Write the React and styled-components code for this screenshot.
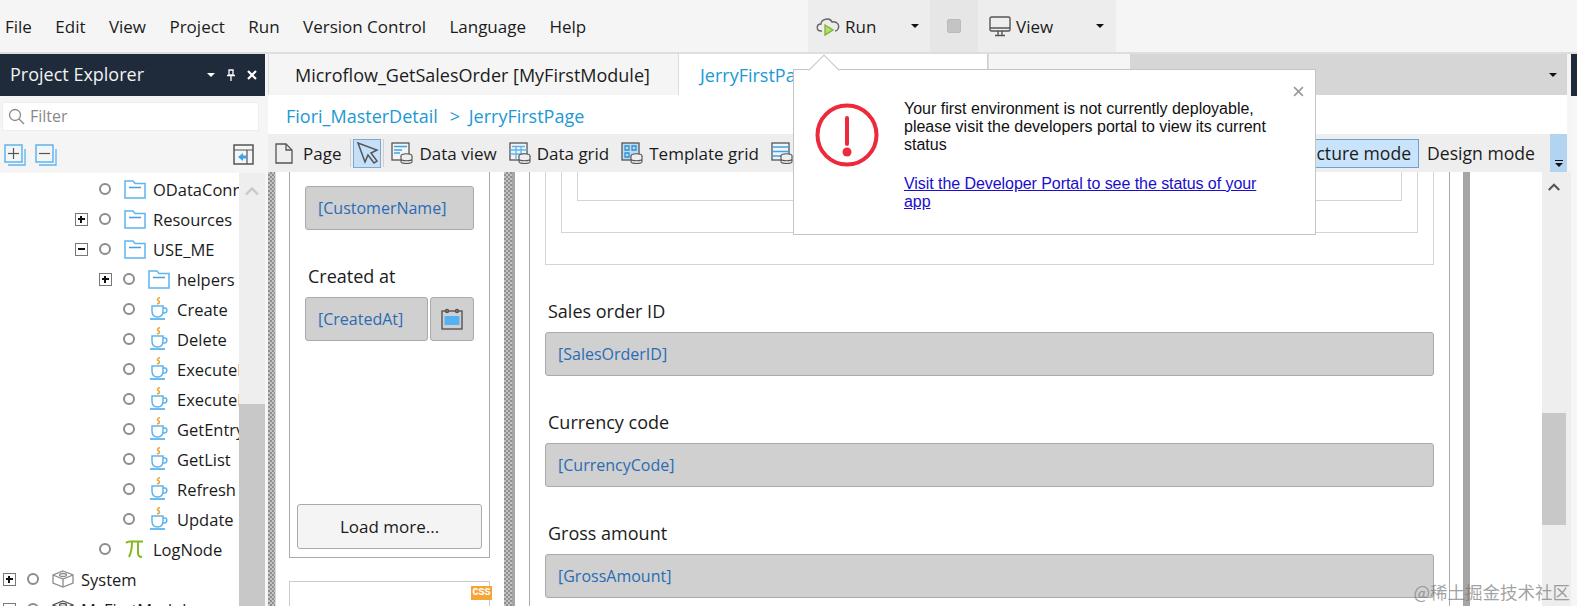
import React from 'react'
import styled, { createGlobalStyle } from "styled-components";

const GlobalStyle = createGlobalStyle`
  html, body {
    margin: 0;
    padding: 0;
    background: #f5f5f5;
    font-family: "Open Sans", "Noto Sans", sans-serif;
    color: #1b1b1b;
  }
  * { box-sizing: border-box; }
`;

const checker = `
  background-color: #c4c4c4;
  background-image: linear-gradient(45deg, #8f8f8f 25%, transparent 25%, transparent 75%, #8f8f8f 75%),
    linear-gradient(45deg, #8f8f8f 25%, transparent 25%, transparent 75%, #8f8f8f 75%);
  background-size: 4px 4px;
  background-position: 0 0, 2px 2px;
`;

const Page = styled.div`
  position: relative;
  width: 1577px;
  height: 606px;
  overflow: hidden;
  display: flex;
  flex-direction: column;
  font-size: 16.5px;
`;

/* top menu */
const MenuBar = styled.div`
  height: 54px;
  flex: none;
  display: flex;
  background: #f5f5f5;
  border-bottom: 2px solid #dedede;
  font-size: 17px;
`;
const MenuList = styled.div`
  width: 808px;
  display: flex;
  align-items: center;
  padding-left: 5px;
  gap: 23.4px;
`;
const ToolGroup = styled.div`
  width: ${p => p.$w}px;
  background: ${p => p.$bg || "#ededed"};
  display: flex;
  align-items: center;
  justify-content: ${p => p.$center ? "center" : "flex-start"};
  padding-left: ${p => p.$center ? 0 : p.$pad || 8}px;
  gap: 5px;
`;
const Caret = styled.span`
  width: 0;
  height: 0;
  border-left: 4px solid transparent;
  border-right: 4px solid transparent;
  border-top: 4px solid ${p => p.$color || "#111"};
  margin-left: ${p => p.$ml || 0}px;
  flex: none;
`;
const StopBox = styled.span`
  width: 14px;
  height: 14px;
  border-radius: 2px;
  background: #c4c4c4;
  border: 1px solid #bbb;
`;

const Body = styled.div`
  flex: 1;
  display: flex;
  min-height: 0;
`;

/* left side */
const Sidebar = styled.div`
  width: 268px;
  flex: none;
  display: flex;
  flex-direction: column;
  background: #f5f5f5;
`;
const PanelHeader = styled.div`
  width: 265px;
  height: 42px;
  flex: none;
  background: #1f2a3a;
  color: #f2f2f2;
  display: flex;
  align-items: center;
  padding: 0 8px 3px 10px;
  font-size: 18px;
`;
const PanelTitle = styled.span`
  flex: 1;
`;
const PanelIcons = styled.div`
  display: flex;
  align-items: center;
  gap: 11px;
  padding-top: 3px;
`;
const FilterBox = styled.div`
  margin: 6px 0 0 2px;
  width: 257px;
  height: 29px;
  flex: none;
  background: #fff;
  border: 1px solid #eee;
  color: #888;
  font-size: 16px;
  display: flex;
  align-items: center;
  gap: 5px;
  padding: 0 0 1px 5px;
`;
const TreeTools = styled.div`
  height: 37px;
  margin-top: 5px;
  flex: none;
  display: flex;
  align-items: center;
  padding: 0 14px 0 4px;
  gap: 9px;
`;
const PaneToggle = styled.span`
  margin-left: auto;
  display: flex;
`;
const TreeArea = styled.div`
  flex: 1;
  width: 265px;
  display: flex;
  min-height: 0;
`;
const TreeList = styled.div`
  width: 239px;
  flex: none;
  background: #fff;
  overflow: hidden;
  padding-top: 1px;
`;
const TreeRow = styled.div`
  height: 30px;
  display: flex;
  align-items: center;
  white-space: nowrap;
  padding-left: ${p => 3 + p.$level * 24}px;
  color: #1b1b1b;
`;
const Expander = styled.span`
  width: 13px;
  height: 13px;
  flex: none;
  margin-right: 11px;
  visibility: ${p => p.$kind ? "visible" : "hidden"};
  border: 1px solid #777;
  position: relative;
  &::before {
    content: "";
    position: absolute;
    left: 2px;
    right: 2px;
    top: 4px;
    height: 2px;
    background: #111;
  }
  &::after {
    content: "";
    display: ${p => p.$kind === "plus" ? "block" : "none"};
    position: absolute;
    top: 2px;
    bottom: 2px;
    left: 4px;
    width: 2px;
    background: #111;
  }
`;
const Radio = styled.span`
  width: 12px;
  height: 12px;
  flex: none;
  margin-right: 13px;
  border: 2px solid #8c8c8c;
  border-radius: 50%;
`;
const TreeIcon = styled.span`
  width: 22px;
  height: 22px;
  flex: none;
  margin-right: 7px;
  display: flex;
  align-items: center;
  justify-content: center;
`;
const Scroll = styled.div`
  flex: 1;
  background: #eeeeee;
  display: flex;
  flex-direction: column;
  align-items: center;
`;
const ScrollGap = styled.div`
  height: ${p => p.$h}px;
  flex: none;
  padding-top: 5px;
`;
const TreeThumb = styled.div`
  flex: 1;
  width: 100%;
  background: #c8c8c8;
`;

/* main area */
const Main = styled.div`
  width: 1303px;
  flex: none;
  display: flex;
  flex-direction: column;
  background: #f5f5f5;
`;
const TabBar = styled.div`
  height: 41px;
  flex: none;
  margin-right: 4px;
  display: flex;
  background: #d6d6d6;
  font-size: 18px;
`;
const Tab = styled.div`
  width: ${p => p.$w}px;
  flex: none;
  display: flex;
  align-items: center;
  padding-left: ${p => p.$pad || 0}px;
  background: ${p => p.$active ? "#fff" : "#f5f5f5"};
  color: ${p => p.$active ? "#1c98d4" : "#1b1b1b"};
  border-left: 1px solid #dcdcdc;
  border-right: ${p => p.$active ? "1px solid #d0d0d0" : "none"};
  white-space: nowrap;
  overflow: hidden;
`;
const TabMenu = styled.div`
  margin-left: auto;
  padding-right: 10px;
  display: flex;
  align-items: center;
`;
const Breadcrumb = styled.div`
  height: 39px;
  flex: none;
  margin-right: 4px;
  background: #fff;
  color: #1c98d4;
  font-size: 18px;
  word-spacing: 4px;
  display: flex;
  align-items: center;
  padding: 3px 0 0 18px;
  gap: 12px;
`;
const Toolbar = styled.div`
  height: 38px;
  flex: none;
  margin-right: 4px;
  background: #eeeeee;
  font-size: 17px;
  display: flex;
  align-items: center;
  padding-left: 7px;
`;
const ToolItem = styled.div`
  display: flex;
  align-items: center;
  gap: ${p => p.$gap || 6}px;
  margin-right: ${p => p.$mr || 12}px;
  white-space: nowrap;
`;
const ToolSep = styled.span`
  width: 1px;
  height: 28px;
  background: #cfcfcf;
  margin: 0 ${p => p.$r || 1}px 0 ${p => p.$l || 1}px;
`;
const PointerBtn = styled.span`
  width: 28px;
  height: 29px;
  background: #c5e0f8;
  border: 1px solid #7ea8d2;
  display: flex;
  align-items: center;
  justify-content: center;
`;
const ModeGroup = styled.div`
  margin-left: auto;
  display: flex;
  align-items: center;
  height: 100%;
  font-size: 17.6px;
`;
const ModeButton = styled.div`
  height: 29px;
  padding: 0 7px;
  display: flex;
  align-items: center;
  white-space: nowrap;
  background: ${p => p.$active ? "#c9e3fa" : "transparent"};
  border: 1px solid ${p => p.$active ? "#6f9fcf" : "transparent"};
`;
const ModeScroll = styled.div`
  width: 17px;
  height: 100%;
  margin-left: 7px;
  background: #b3d4f0;
  display: flex;
  flex-direction: column;
  align-items: center;
  justify-content: flex-end;
  padding-bottom: 5px;
  gap: 2px;
`;
const ModeDash = styled.span`
  width: 8px;
  height: 1px;
  background: #111;
`;

const Canvas = styled.div`
  flex: 1;
  min-height: 0;
  display: flex;
  background: #fff;
  overflow: hidden;
`;
const CheckerStripe = styled.div`
  width: 7px;
  flex: none;
  ${checker}
`;
const ListPane = styled.div`
  width: 229px;
  flex: none;
  padding-left: 13px;
  border-left: 1px solid #ddd;
`;
const ListBox = styled.div`
  width: 201px;
  height: 386px;
  border: 1px solid #aaa;
  border-top: none;
  padding: 14px 15px 8px;
  display: flex;
  flex-direction: column;
`;
const ListLabel = styled.div`
  margin: 33px 0 8px 3px;
  line-height: 26px;
  font-size: 18px;
`;
const GrayInput = styled.div`
  height: 44px;
  background: #d0d0d0;
  border: 1px solid #aaa;
  border-radius: 3px;
  color: #2a6cb4;
  font-size: 16px;
  display: flex;
  align-items: center;
  padding-left: 12px;
  white-space: nowrap;
`;
const InputRow = styled.div`
  display: flex;
  gap: 2px;
  ${GrayInput} {
    flex: 1;
  }
`;
const CalendarButton = styled.div`
  width: 44px;
  height: 44px;
  flex: none;
  background: #d0d0d0;
  border: 1px solid #aaa;
  border-radius: 3px;
  display: flex;
  align-items: center;
  justify-content: center;
`;
const LoadMore = styled.div`
  margin: auto -8px 0;
  height: 45px;
  background: #f4f4f4;
  border: 1px solid #aaa;
  border-radius: 3px;
  font-size: 17px;
  display: flex;
  align-items: center;
  justify-content: center;
`;
const CssBox = styled.div`
  position: relative;
  width: 201px;
  height: 60px;
  margin-top: 23px;
  border: 1px solid #ccc;
`;
const CssBadge = styled.span`
  position: absolute;
  top: 4px;
  right: -3px;
  width: 21px;
  height: 14px;
  background: #f6a637;
  color: #fff;
  font-family: "Liberation Mono", monospace;
  font-weight: bold;
  font-size: 10px;
  line-height: 14px;
  text-align: center;
`;
const Splitter = styled.div`
  width: 11px;
  flex: none;
  ${checker}
  border-right: 3px solid #a5a5a5;
`;
const DetailPane = styled.div`
  width: 948px;
  flex: none;
  padding-left: 14px;
`;
const DetailFrame = styled.div`
  width: 921px;
  height: 100%;
  border-left: 1px solid #aaa;
  border-right: 1px solid #aaa;
  padding: 0 15px;
`;
const NestBox = styled.div`
  border: 1px solid #d4d4d4;
  border-top: none;
  padding: 0 15px ${p => p.$pb}px;
`;
const NestInner = styled.div`
  height: 29px;
  border: 1px solid #d4d4d4;
  border-top: none;
`;
const FieldGroup = styled.div`
  margin-top: ${p => p.$mt || 35}px;
`;
const FieldLabel = styled.div`
  line-height: 22px;
  margin: 0 0 10px 3px;
  font-size: 18px;
`;
const GrayBar = styled.div`
  width: 7px;
  flex: none;
  background: #a5a5a5;
`;
const CanvasGap = styled.div`
  flex: 1;
`;
const CanvasScroll = styled.div`
  width: 29px;
  flex: none;
  background: #eeeeee;
  display: flex;
  flex-direction: column;
`;
const CanvasChevron = styled.div`
  height: 241px;
  flex: none;
  width: 24px;
  padding-top: 10px;
  display: flex;
  justify-content: center;
`;
const CanvasThumb = styled.div`
  width: 24px;
  height: 112px;
  background: #c8c8c8;
`;
const RightEdge = styled.div`
  width: 6px;
  flex: none;
  display: flex;
  flex-direction: column;
  background: #f4f6f8;
`;
const RightDark = styled.div`
  height: 42px;
  background: #1f2a3a;
`;

/* popup over everything */
const Popup = styled.div`
  position: absolute;
  left: 793px;
  top: 69px;
  width: 523px;
  height: 166px;
  background: #fff;
  border: 1px solid #c4c4c4;
  display: flex;
  font-family: "Liberation Sans", Arial, sans-serif;
  font-size: 16px;
  line-height: 18px;
  color: #111;
  &::before {
    content: "";
    position: absolute;
    left: 19px;
    top: -11px;
    width: 21px;
    height: 21px;
    background: #fff;
    border-left: 1px solid #c4c4c4;
    border-top: 1px solid #c4c4c4;
    transform: rotate(45deg);
  }
`;
const PopupIcon = styled.div`
  width: 110px;
  flex: none;
  padding: 33px 0 0 21px;
`;
const PopupBody = styled.div`
  width: 365px;
  padding-top: 30px;
`;
const PopupLink = styled.a`
  display: block;
  margin-top: 21px;
  color: #1a0dcc;
  text-decoration: underline;
  letter-spacing: -0.06px;
`;
const PopupClose = styled.span`
  position: absolute;
  right: 11px;
  top: 16px;
  display: flex;
`;
const Watermark = styled.div`
  position: absolute;
  right: 7px;
  bottom: 2px;
  font-family: "Noto Sans CJK SC", sans-serif;
  font-size: 17.5px;
  color: rgba(120, 120, 120, 0.7);
  white-space: nowrap;
`;

const FolderIcon = () => (
  <svg width="22" height="19" viewBox="0 0 22 19" fill="none" stroke="#5db4ee" strokeWidth="1.5">
    <path d="M1 1h8l2 2.5h10V18H1z" />
    <path d="M5 7.5h12" stroke="#4a9fd8" />
  </svg>
);

const CupIcon = () => (
  <svg width="20" height="24" viewBox="0 0 20 24" fill="none">
    <path d="M11 .8C8 .8 8 3.300 9.500 3.800 11 4.300 11 6.800 8 6.800" stroke="#e9a33a" strokeWidth="1.500" />
    <path d="M3 9h11v5c0 4-2 6-5.500 6S3 18 3 14z" stroke="#5db4ee" strokeWidth="1.500" />
    <path d="M14 11h2c2.500 0 2.500 5-.5 5h-2" stroke="#5db4ee" strokeWidth="1.500" />
    <path d="M1 22h15" stroke="#5db4ee" strokeWidth="1.800" />
  </svg>
);

const PiIcon = () => (
  <svg width="20" height="20" viewBox="0 0 20 20" fill="none" stroke="#85b81e" strokeWidth="2">
    <path d="M1 4c1-1 2-1.500 4-1.500h13" />
    <path d="M7 3c0 6-1 11-3 15" />
    <path d="M13 3v11c0 3 1 4 4 4" />
  </svg>
);

const ModuleIcon = ({ color = "#8c8c8c" }) => (
  <svg width="22" height="18" viewBox="0 0 22 18" fill="none" stroke={color} strokeWidth="1.300">
    <path d="M11 1l10 4v8l-10 4L1 13V5z" />
    <path d="M1 5l10 4 10-4M11 9v8" />
    <ellipse cx="11" cy="5" rx="3.500" ry="1.500" />
  </svg>
);

const StackIcon = ({ minus }) => (
  <svg width="22" height="22" viewBox="0 0 22 22" fill="none">
    <path d="M4 21h17V5" stroke="#5db4ee" strokeWidth="1.300" />
    <rect x="1" y="1" width="17" height="17" fill="#f5f5f5" stroke="#5db4ee" strokeWidth="1.500" />
    <path d="M4 9.500h11" stroke="#555" strokeWidth="1.200" />
    {!minus && <path d="M9.500 4v11" stroke="#555" strokeWidth="1.200" />}
  </svg>
);

const CollapsePaneIcon = () => (
  <svg width="21" height="21" viewBox="0 0 21 21" fill="none">
    <rect x="1" y="1" width="19" height="19" stroke="#555" strokeWidth="1.500" />
    <path d="M1 6h19M14 6v14" stroke="#555" strokeWidth="1.200" />
    <path d="M10 9v8l-5-4z" fill="#3ba4e6" />
    <path d="M9 11.500h5v3H9z" fill="#3ba4e6" />
  </svg>
);

const SearchIcon = () => (
  <svg width="17" height="17" viewBox="0 0 17 17" fill="none" stroke="#888" strokeWidth="1.300">
    <circle cx="7" cy="7" r="5.500" />
    <path d="M11 11l5 5" />
  </svg>
);

const PinIcon = () => (
  <svg width="10" height="12" viewBox="0 0 10 12" fill="none" stroke="#fff" strokeWidth="1.300">
    <path d="M3 1h4v5H3zM1 6.500h8M5 7v5" />
  </svg>
);

const CloseIcon = ({ size = 10, color = "#fff", width = 2.2 }) => (
  <svg width={size} height={size} viewBox="0 0 10 10" fill="none" stroke={color} strokeWidth={width}>
    <path d="M1 1l8 8M9 1l-8 8" />
  </svg>
);

const RunIcon = () => (
  <svg width="24" height="22" viewBox="0 0 24 22" fill="none">
    <path d="M6 16H5c-5 0-5-7 0-7 0-5 9-7 11-2 5-1 8 3 6 7-.5 1-1.500 2-3 2" stroke="#666" strokeWidth="1.400" />
    <path d="M9 10l8 5-8 5z" fill="#b5dc6c" stroke="#7db52a" strokeWidth="1.300" />
  </svg>
);

const MonitorIcon = () => (
  <svg width="22" height="21" viewBox="0 0 22 21" fill="none" stroke="#555" strokeWidth="1.400">
    <rect x="1" y="1" width="20" height="14" rx="1.500" />
    <path d="M1 12h20M9 15v4M13 15v4M6 19.500h10" />
  </svg>
);

const PageIcon = () => (
  <svg width="18" height="21" viewBox="0 0 18 21" fill="none" stroke="#555" strokeWidth="1.300">
    <path d="M1 1h10l6 6v13H1z" />
    <path d="M11 1v6h6" />
  </svg>
);

const PointerIcon = () => (
  <svg width="23" height="25" viewBox="0 0 23 25" fill="none" stroke="#555" strokeWidth="1.500">
    <path d="M2 2l7 19 3-7 6 8 3-2-6-8 6-3z" />
  </svg>
);

const DbWidget = ({ kind }) => (
  <svg width="22" height="22" viewBox="0 0 22 22" fill="none">
    <rect x="1" y="1" width="17" height="17" fill={kind === "template" ? "#bcdcf5" : "#f4f4f4"} stroke="#555" strokeWidth="1.300" />
    {kind === "view" && <path d="M3 4.500h13M3 8h8M3 11h6" stroke="#3ba4e6" strokeWidth="1.500" />}
    {kind === "grid" && <path d="M3 4.500h13M1 8h17M1 12h17M7 5v12M12 5v12" stroke="#5db4ee" strokeWidth="1.300" />}
    {kind === "template" && <path d="M4 4h4v4H4zM11 4h4v4h-4zM4 11h4v4H4z" stroke="#2f8ed0" strokeWidth="1.300" />}
    {kind === "list" && <path d="M1 5h17M1 9.500h17M1 14h17" stroke="#3ba4e6" strokeWidth="1.500" />}
    <ellipse cx="15.500" cy="14" rx="5.500" ry="2.200" fill="#eee" stroke="#555" strokeWidth="1.100" />
    <path d="M10 14v5.500c0 1.200 2.500 2 5.500 2s5.500-.8 5.500-2V14M10 16.800c0 1.200 2.500 2 5.500 2s5.500-.8 5.500-2" fill="#eee" stroke="#555" strokeWidth="1.100" />
  </svg>
);

const CalendarIcon = () => (
  <svg width="22" height="22" viewBox="0 0 22 22" fill="none">
    <rect x="1" y="3" width="20" height="18" stroke="#555" strokeWidth="1.400" />
    <circle cx="6" cy="3" r="1.600" stroke="#555" strokeWidth="1.200" />
    <circle cx="16" cy="3" r="1.600" stroke="#555" strokeWidth="1.200" />
    <rect x="3.500" y="8" width="15" height="9" fill="#54b2f2" />
  </svg>
);

const AlertIcon = () => (
  <svg width="64" height="64" viewBox="0 0 64 64" fill="none" stroke="#ec2a3b">
    <circle cx="32" cy="32" r="29.500" strokeWidth="4" />
    <path d="M32 15v26" strokeWidth="4" strokeLinecap="round" />
    <circle cx="32" cy="49" r="4.500" fill="#ec2a3b" stroke="none" />
  </svg>
);

const ChevronUp = ({ color, size = 16 }) => (
  <svg width={size} height="10" viewBox="0 0 16 10" fill="none" stroke={color} strokeWidth="2.400">
    <path d="M2 8.500l6-6 6 6" />
  </svg>
);

const menus = ["File", "Edit", "View", "Project", "Run", "Version Control", "Language", "Help"];

const treeRows = [
  { level: 3, icon: "folder", name: "ODataConnector" },
  { level: 3, icon: "folder", name: "Resources", exp: "plus" },
  { level: 3, icon: "folder", name: "USE_ME", exp: "minus" },
  { level: 4, icon: "folder", name: "helpers", exp: "plus" },
  { level: 4, icon: "cup", name: "Create" },
  { level: 4, icon: "cup", name: "Delete" },
  { level: 4, icon: "cup", name: "ExecuteEntity" },
  { level: 4, icon: "cup", name: "ExecuteEntries" },
  { level: 4, icon: "cup", name: "GetEntry" },
  { level: 4, icon: "cup", name: "GetList" },
  { level: 4, icon: "cup", name: "Refresh" },
  { level: 4, icon: "cup", name: "Update" },
  { level: 3, icon: "pi", name: "LogNode" },
  { level: 0, icon: "module", name: "System", exp: "plus" },
  { level: 0, icon: "moduleDark", name: "MyFirstModule", exp: "minus" },
];

const treeIcons = {
  folder: <FolderIcon />,
  cup: <CupIcon />,
  pi: <PiIcon />,
  module: <ModuleIcon />,
  moduleDark: <ModuleIcon color="#555" />,
};

const fields = [
  { label: "Sales order ID", value: "[SalesOrderID]", mt: 35 },
  { label: "Currency code", value: "[CurrencyCode]" },
  { label: "Gross amount", value: "[GrossAmount]" },
];

export default function App() {
  return (
    <Page>
      <GlobalStyle />
      <MenuBar>
        <MenuList>
          {menus.map(m => <span key={m}>{m}</span>)}
        </MenuList>
        <ToolGroup $w={122}>
          <RunIcon />
          <span>Run</span>
          <Caret $ml={30} />
        </ToolGroup>
        <ToolGroup $w={48} $bg="#e6e6e6" $center><StopBox /></ToolGroup>
        <ToolGroup $w={138} $pad={11}>
          <MonitorIcon />
          <span>View</span>
          <Caret $ml={38} />
        </ToolGroup>
      </MenuBar>
      <Body>
        <Sidebar>
          <PanelHeader>
            <PanelTitle>Project Explorer</PanelTitle>
            <PanelIcons>
              <Caret $color="#fff" />
              <PinIcon />
              <CloseIcon />
            </PanelIcons>
          </PanelHeader>
          <FilterBox><SearchIcon />Filter</FilterBox>
          <TreeTools>
            <StackIcon />
            <StackIcon minus />
            <PaneToggle><CollapsePaneIcon /></PaneToggle>
          </TreeTools>
          <TreeArea>
            <TreeList>
              {treeRows.map(r => (
                <TreeRow key={r.name} $level={r.level}>
                  <Expander $kind={r.exp} />
                  <Radio />
                  <TreeIcon>{treeIcons[r.icon]}</TreeIcon>
                  {r.name}
                </TreeRow>
              ))}
            </TreeList>
            <Scroll>
              <ScrollGap $h={231}><ChevronUp color="#c8c8c8" /></ScrollGap>
              <TreeThumb />
            </Scroll>
          </TreeArea>
        </Sidebar>
        <Main>
          <TabBar>
            <Tab $w={410} $pad={26}>Microflow_GetSalesOrder [MyFirstModule]</Tab>
            <Tab $w={310} $pad={21} $active>JerryFirstPage</Tab>
            <Tab $w={142} />
            <TabMenu><Caret /></TabMenu>
          </TabBar>
          <Breadcrumb>
            <span>Fiori_MasterDetail</span>
            <span>&gt; JerryFirstPage</span>
          </Breadcrumb>
          <Toolbar>
            <ToolItem $mr={8} $gap={10}><PageIcon />Page</ToolItem>
            <ToolSep $r={2} />
            <PointerBtn><PointerIcon /></PointerBtn>
            <ToolSep $l={2} $r={7} />
            <ToolItem><DbWidget kind="view" />Data view</ToolItem>
            <ToolItem><DbWidget kind="grid" />Data grid</ToolItem>
            <ToolItem><DbWidget kind="template" />Template grid</ToolItem>
            <ToolItem><DbWidget kind="list" />List view</ToolItem>
            <ModeGroup>
              <ModeButton $active>Structure mode</ModeButton>
              <ModeButton>Design mode</ModeButton>
              <ModeScroll>
                <ModeDash />
                <Caret />
              </ModeScroll>
            </ModeGroup>
          </Toolbar>
          <Canvas>
            <CheckerStripe />
            <ListPane>
              <ListBox>
                <GrayInput>[CustomerName]</GrayInput>
                <ListLabel>Created at</ListLabel>
                <InputRow>
                  <GrayInput>[CreatedAt]</GrayInput>
                  <CalendarButton><CalendarIcon /></CalendarButton>
                </InputRow>
                <LoadMore>Load more...</LoadMore>
              </ListBox>
              <CssBox><CssBadge>CSS</CssBadge></CssBox>
            </ListPane>
            <Splitter />
            <DetailPane>
              <DetailFrame>
                <NestBox $pb={31}>
                  <NestBox $pb={31}>
                    <NestInner />
                  </NestBox>
                </NestBox>
                {fields.map(f => (
                  <FieldGroup key={f.label} $mt={f.mt}>
                    <FieldLabel>{f.label}</FieldLabel>
                    <GrayInput>{f.value}</GrayInput>
                  </FieldGroup>
                ))}
              </DetailFrame>
            </DetailPane>
            <GrayBar />
            <CanvasGap />
            <CanvasScroll>
              <CanvasChevron><ChevronUp color="#555" size={14} /></CanvasChevron>
              <CanvasThumb />
            </CanvasScroll>
          </Canvas>
        </Main>
        <RightEdge><RightDark /></RightEdge>
      </Body>
      <Popup>
        <PopupIcon><AlertIcon /></PopupIcon>
        <PopupBody>
          Your first environment is not currently deployable, please visit the developers portal to view its current status
          <PopupLink href="#">Visit the Developer Portal to see the status of your app</PopupLink>
        </PopupBody>
        <PopupClose><CloseIcon size={11} color="#999" width={1.4} /></PopupClose>
      </Popup>
      <Watermark>@稀土掘金技术社区</Watermark>
    </Page>
  );
}
